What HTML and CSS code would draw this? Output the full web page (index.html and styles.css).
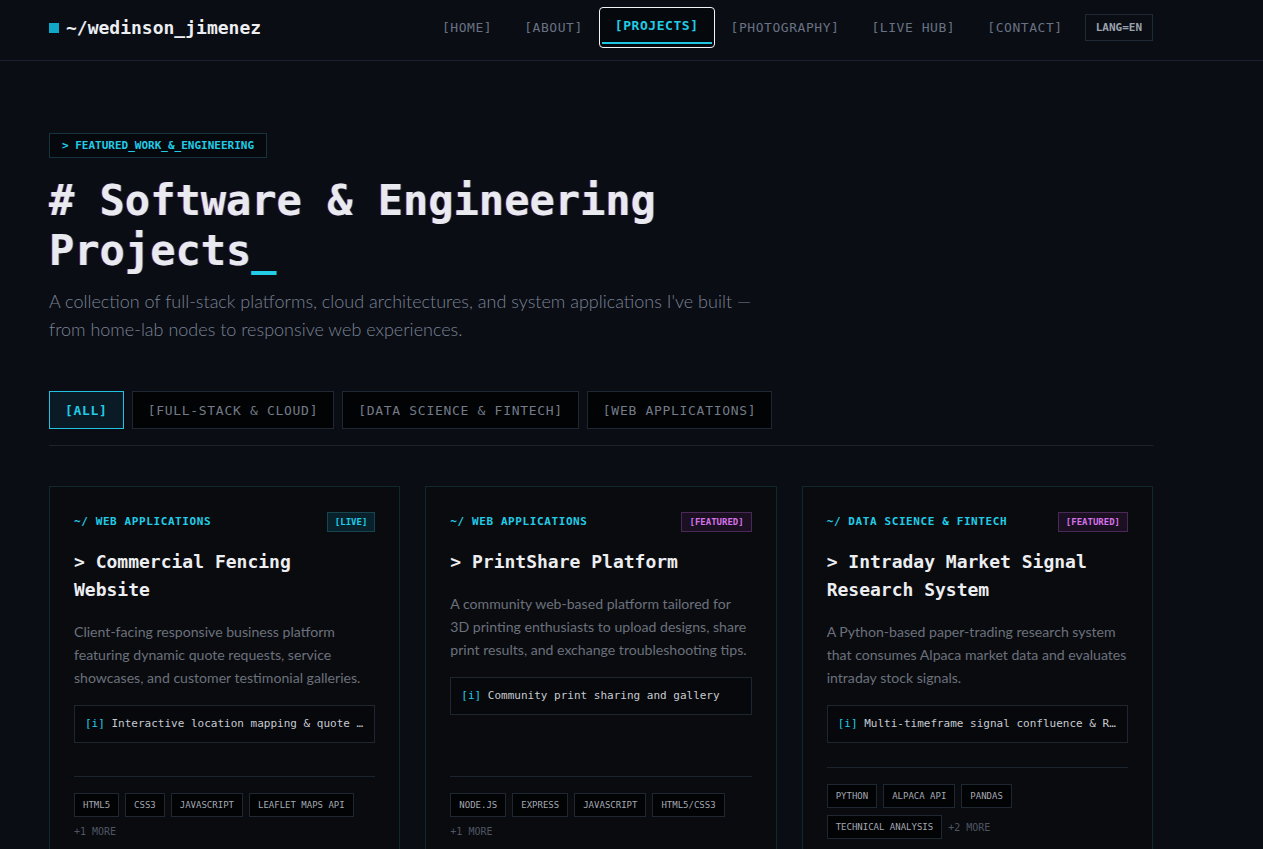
FILE: index.html
```html
<!DOCTYPE html>
<html>
<head>
    <title>Projects - wedinson_jimenez</title>
    <link rel="stylesheet" href="styles.css">
</head>
<body>
<header class="nav">
    <div class="nav-inner">
        <a class="logo" href="#"><span class="logo-mark"></span>~/wedinson_jimenez</a>
        <nav class="links">
            <a class="link" href="#">[HOME]</a>
            <a class="link" href="#">[ABOUT]</a>
            <a class="link active" href="#">[PROJECTS]</a>
            <a class="link" href="#">[PHOTOGRAPHY]</a>
            <a class="link" href="#">[LIVE HUB]</a>
            <a class="link" href="#">[CONTACT]</a>
            <button class="lang">LANG=EN</button>
        </nav>
    </div>
</header>

<main class="page">
    <div class="hero-tag">&gt; FEATURED_WORK_&amp;_ENGINEERING</div>
    <h1 class="hero-title"># Software &amp; Engineering Projects<span class="cursor">_</span></h1>
    <p class="hero-sub">A collection of full-stack platforms, cloud architectures, and system applications I've built — from home-lab nodes to responsive web experiences.</p>

    <div class="filters">
        <button class="filter on">[ALL]</button>
        <button class="filter">[FULL-STACK &amp; CLOUD]</button>
        <button class="filter">[DATA SCIENCE &amp; FINTECH]</button>
        <button class="filter">[WEB APPLICATIONS]</button>
    </div>

    <div class="cards">
        <article class="card">
            <div class="card-head">
                <span class="cat">~/ WEB APPLICATIONS</span>
                <span class="badge live">[LIVE]</span>
            </div>
            <h2 class="card-title">&gt; Commercial Fencing Website</h2>
            <p class="card-desc">Client-facing responsive business platform featuring dynamic quote requests, service showcases, and customer testimonial galleries.</p>
            <div class="info"><span class="info-i">[i]</span> Interactive location mapping &amp; quote request workflow</div>
            <div class="card-foot">
                <span class="tag">HTML5</span>
                <span class="tag">CSS3</span>
                <span class="tag">JAVASCRIPT</span>
                <span class="tag">LEAFLET MAPS API</span>
                <span class="more">+1 MORE</span>
            </div>
        </article>

        <article class="card">
            <div class="card-head">
                <span class="cat">~/ WEB APPLICATIONS</span>
                <span class="badge featured">[FEATURED]</span>
            </div>
            <h2 class="card-title">&gt; PrintShare Platform</h2>
            <p class="card-desc">A community web-based platform tailored for 3D printing enthusiasts to upload designs, share print results, and exchange troubleshooting tips.</p>
            <div class="info"><span class="info-i">[i]</span> Community print sharing and gallery</div>
            <div class="card-foot">
                <span class="tag">NODE.JS</span>
                <span class="tag">EXPRESS</span>
                <span class="tag">JAVASCRIPT</span>
                <span class="tag">HTML5/CSS3</span>
                <span class="more">+1 MORE</span>
            </div>
        </article>

        <article class="card">
            <div class="card-head">
                <span class="cat">~/ DATA SCIENCE &amp; FINTECH</span>
                <span class="badge featured">[FEATURED]</span>
            </div>
            <h2 class="card-title">&gt; Intraday Market Signal Research System</h2>
            <p class="card-desc">A Python-based paper-trading research system that consumes Alpaca market data and evaluates intraday stock signals.</p>
            <div class="info"><span class="info-i">[i]</span> Multi-timeframe signal confluence &amp; Risk scoring</div>
            <div class="card-foot">
                <span class="tag">PYTHON</span>
                <span class="tag">ALPACA API</span>
                <span class="tag">PANDAS</span>
                <span class="tag">TECHNICAL ANALYSIS</span>
                <span class="more">+2 MORE</span>
            </div>
        </article>
    </div>
</main>
</body>
</html>
```

FILE: styles.css
```css
body {
margin: 0;
background-color: #0a0d14;
color: #e5e7eb;
font-family: "DejaVu Sans Mono", "Liberation Mono", monospace;
}

a {
text-decoration: none;
}

button {
font-family: inherit;
cursor: pointer;
}

/* top bar */
.nav {
height: 60px;
border-bottom: 1px solid #1a212c;
}
.nav-inner {
width: 1104px;
margin-left: 49px;
height: 55px;
display: flex;
align-items: center;
justify-content: space-between;
}
.logo {
display: flex;
align-items: center;
gap: 7px;
color: #eceef2;
font-weight: bold;
font-size: 18px;
}
.logo-mark {
width: 10px;
height: 10px;
background-color: #10a8c8;
}
.links {
display: flex;
align-items: center;
}
.link {
position: relative;
padding: 12px 15px;
font-size: 13px;
letter-spacing: 0.55px;
color: #687282;
border: 1px solid transparent;
border-radius: 4px;
}
.link.active {
color: #22cbe6;
font-weight: bold;
border-color: #f2f4f6;
background-color: #05080d;
padding-top: 10px;
padding-bottom: 14px;
}
.link.active::after {
content: "";
position: absolute;
left: 2px;
right: 2px;
bottom: 3px;
height: 2px;
background-color: #1ec6e4;
}
.lang {
margin-left: 6px;
height: 27px;
padding: 0 10px;
background-color: #0a0d14;
border: 1px solid #1f2a38;
color: #9aa1ad;
font-size: 11px;
font-weight: bold;
}

/* hero */
.page {
width: 1104px;
margin-left: 49px;
padding-top: 72px;
}
.hero-tag {
display: inline-block;
height: 23px;
line-height: 23px;
padding: 0 12px;
border: 1px solid #17333d;
background-color: #05080c;
color: #22cbe6;
font-size: 11px;
font-weight: bold;
}
.hero-title {
margin: 18px 0 0;
width: 640px;
font-size: 42px;
line-height: 50px;
font-weight: bold;
color: #e8eaef;
text-shadow: -1px 0 rgba(255, 40, 90, 0.45), 1px 0 rgba(40, 160, 255, 0.45);
}
.cursor {
color: #22cbe6;
text-shadow: none;
}
.hero-sub {
margin: 11px 0 0;
width: 735px;
font-family: "Lato", "Open Sans", sans-serif;
font-weight: 300;
font-size: 18px;
line-height: 28px;
color: #7a8394;
}

/* filters */
.filters {
margin-top: 48px;
padding-bottom: 16px;
border-bottom: 1px solid #1b232e;
display: flex;
gap: 8px;
}
.filter {
height: 38px;
padding: 0 15px;
background-color: #020305;
border: 1px solid #1f2733;
color: #737b88;
font-size: 13px;
letter-spacing: 0.7px;
}
.filter.on {
background-color: #0a1b25;
border-color: #22c3e0;
color: #22cbe6;
font-weight: bold;
}

/* cards */
.cards {
margin-top: 40px;
display: grid;
grid-template-columns: repeat(3, minmax(0, 1fr));
gap: 25px;
}
.card {
min-width: 0;
display: flex;
flex-direction: column;
padding: 24px;
background-color: #0a0b0f;
border: 1px solid #10292d;
}
.card-head {
height: 21px;
display: flex;
align-items: center;
justify-content: space-between;
}
.cat {
font-size: 11px;
font-weight: bold;
letter-spacing: 0.6px;
color: #22cbe6;
}
.badge {
height: 18px;
line-height: 18px;
padding: 0 7px;
font-size: 9px;
font-weight: bold;
}
.badge.live {
color: #22cbe6;
background-color: #08212a;
border: 1px solid #16444f;
}
.badge.featured {
color: #d472e6;
background-color: #1b0f22;
border: 1px solid #4a2857;
}
.card-title {
margin: 16px 0 0;
font-size: 18px;
line-height: 28px;
font-weight: bold;
color: #eceef1;
}
.card-desc {
margin: 16px 0 0;
font-family: "Lato", "Open Sans", sans-serif;
font-size: 14.1px;
line-height: 23px;
color: #6b717c;
}
.info {
margin: 16px 0 24px;
height: 36px;
line-height: 36px;
padding: 0 10px;
border: 1px solid #1e2632;
background-color: #06080b;
font-size: 11px;
color: #c6cad1;
white-space: nowrap;
overflow: hidden;
text-overflow: ellipsis;
}
.info-i {
color: #22cbe6;
}
.card-foot {
margin-top: auto;
padding-top: 16px;
border-top: 1px solid #1b2530;
display: flex;
flex-wrap: wrap;
align-items: center;
gap: 7px 6px;
}
.tag {
height: 22px;
line-height: 22px;
padding: 0 8px;
background-color: #020305;
border: 1px solid #1f2733;
color: #a3a8b1;
font-size: 9px;
}
.more {
font-size: 10px;
line-height: 15px;
color: #4f5663;
}
```
